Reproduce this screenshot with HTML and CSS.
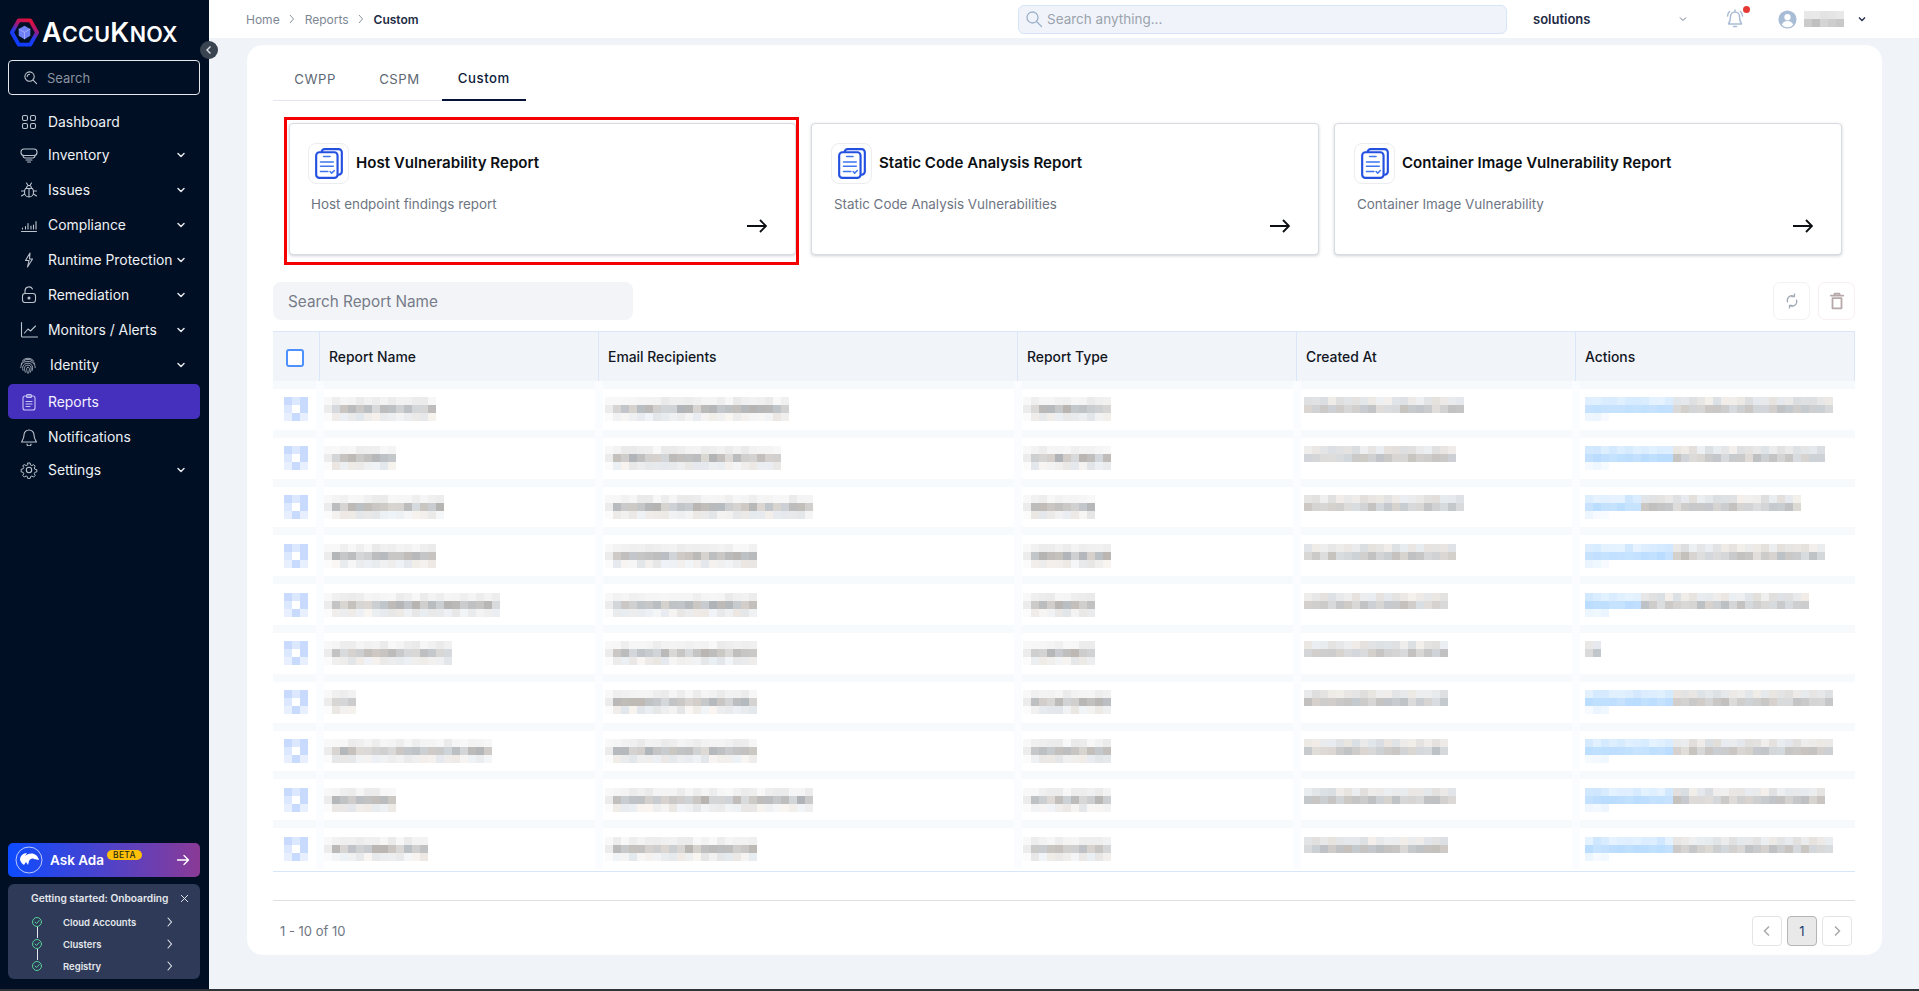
FILE: index.html
```html
<!DOCTYPE html>
<html lang="en">
<head>
<meta charset="utf-8">
<title>AccuKnox Reports</title>
<link rel="stylesheet" href="styles.css">
</head>
<body>
<div class="app">
  <aside class="sidebar">
    <div class="logo">
      <svg class="logo-mark" viewBox="0 0 30 30" width="29" height="29">
        <defs><linearGradient id="hex" x1="0.7" y1="0" x2="0.3" y2="1"><stop offset="0" stop-color="#e0103c"/><stop offset="0.25" stop-color="#b0156e"/><stop offset="0.6" stop-color="#1e3cf0"/><stop offset="1" stop-color="#0f3cff"/></linearGradient></defs>
        <path d="M9 2.500h12L28 15l-7 12.500H9L2 15z" fill="none" stroke="url(#hex)" stroke-width="4" stroke-linejoin="round"/>
        <path d="M15 8l6 3.400v7L15 22l-6-3.600v-7z" fill="#6f80f5"/>
        <path d="M9 11.400l6 3.400 6-3.400M15 14.800V22" fill="none" stroke="#a9b4ff" stroke-width=".8"/>
      </svg>
      <span class="logo-text">A<small>CCU</small>K<small>NOX</small></span>
    </div>
    <label class="side-search">
      <svg viewBox="0 0 16 16" width="15" height="15" class="ic"><circle cx="7" cy="7" r="5"/><path d="M11 11l3.500 3.500M4.500 7A2.500 2.500 0 0 1 7 4.500"/></svg>
      <span>Search</span>
    </label>
    <nav class="nav">
      <a class="nav-item first"><svg viewBox="0 0 18 18" class="ic"><rect x="2.500" y="2.500" width="5" height="5" rx="1.500"/><rect x="10.500" y="2.500" width="5" height="5" rx="1.500"/><rect x="2.500" y="10.500" width="5" height="5" rx="1.500"/><rect x="10.500" y="10.500" width="5" height="5" rx="1.500"/></svg><span>Dashboard</span></a>
      <a class="nav-item tight"><svg viewBox="0 0 18 18" class="ic"><rect x="1" y="3" width="16" height="6.500" rx="3"/><path d="M3 9.500c0 1.500 1 2.500 2.500 2.500h7c1.500 0 2.500-1 2.500-2.500M6 14h6M7.500 16h3"/></svg><span>Inventory</span><svg viewBox="0 0 10 10" class="chev"><path d="M2 3.500L5 6.500 8 3.500"/></svg></a>
      <a class="nav-item"><svg viewBox="0 0 18 18" class="ic"><path d="M5.500 7.500h7c.8 1 1 2.500 1 4 0 2.500-2 4.500-4.500 4.500s-4.500-2-4.500-4.500c0-1.500.2-3 1-4zM6.500 7.500C6.500 5.500 7.500 4.500 9 4.500s2.500 1 2.500 3M6.500 2l1.500 2.500M11.500 2L10 4.500M9 8v8M4.500 10H1.500M13.500 10h3M4.500 13L1.500 15M13.500 13l3 2"/></svg><span>Issues</span><svg viewBox="0 0 10 10" class="chev"><path d="M2 3.500L5 6.500 8 3.500"/></svg></a>
      <a class="nav-item"><svg viewBox="0 0 18 18" class="ic"><path d="M1.500 15.500h15M2.500 13v-1M5.500 13v-2.500M8 13V7.500M11 13v-3M13.500 13V9M16 13V5.500"/></svg><span>Compliance</span><svg viewBox="0 0 10 10" class="chev"><path d="M2 3.500L5 6.500 8 3.500"/></svg></a>
      <a class="nav-item"><svg viewBox="0 0 18 18" class="ic"><path d="M10 2L5.500 9.500H9L7.500 16l5-8H9.500z"/></svg><span>Runtime Protection</span><svg viewBox="0 0 10 10" class="chev"><path d="M2 3.500L5 6.500 8 3.500"/></svg></a>
      <a class="nav-item"><svg viewBox="0 0 18 18" class="ic"><rect x="2.500" y="7.500" width="13" height="9" rx="2.500"/><path d="M5 7.500V5a4 4 0 0 1 7.500-2"/><circle cx="9" cy="12" r="1" class="dot"/></svg><span>Remediation</span><svg viewBox="0 0 10 10" class="chev"><path d="M2 3.500L5 6.500 8 3.500"/></svg></a>
      <a class="nav-item"><svg viewBox="0 0 18 18" class="ic"><path d="M1.500 1.500V15a1 1 0 0 0 1 1h15M4.500 12l3.500-4 2.500 2 5-5"/></svg><span>Monitors / Alerts</span><svg viewBox="0 0 10 10" class="chev"><path d="M2 3.500L5 6.500 8 3.500"/></svg></a>
      <a class="nav-item identity"><svg viewBox="0 0 20 20" class="ic finger"><path d="M4 5a8 8 0 0 1 12 0M2.500 9a8 8 0 0 1 15 0M2 13c0-5 3-7 8-7s8 3 8 7M4.500 16c-.5-1.500-.5-3-.3-4 .6-2.500 2.800-4 5.800-4s5 2 5 5c0 1 0 2-.3 3M7 18c-.8-2-1-4-.8-5.500C6.500 11 8 10.200 10 10.200s3.500 1.300 3.500 3.300c0 1.500-.2 3-.8 4.500M9.500 19c-.8-1.500-1-3.500-1-5 0-1 .5-1.500 1.500-1.500s1.500.7 1.500 1.700c0 1.500-.2 3.200-1 4.800"/></svg><span>Identity</span><svg viewBox="0 0 10 10" class="chev"><path d="M2 3.500L5 6.500 8 3.500"/></svg></a>
      <a class="nav-item active"><svg viewBox="0 0 18 18" class="ic"><rect x="3" y="3" width="12" height="14" rx="2"/><rect x="6.500" y="1.500" width="5" height="3" rx="1"/><path d="M6 8.500h6M6 11h6M6 13.500h4"/></svg><span>Reports</span></a>
      <a class="nav-item"><svg viewBox="0 0 18 18" class="ic"><path d="M9 2a5 5 0 0 0-5 5c0 4-2 6-2.500 7h15c-.5-1-2.500-3-2.500-7a5 5 0 0 0-5-5zM7 16a2 2 0 0 0 4 0"/></svg><span>Notifications</span></a>
      <a class="nav-item tight"><svg viewBox="0 0 18 18" class="ic"><circle cx="9" cy="9" r="2.700"/><path d="M7.800 1.200h2.400l.5 2.200 1.500.7 2-1.100 1.700 1.700-1.100 2 .7 1.500 2.200.5v2.400l-2.200.5-.7 1.500 1.100 2-1.700 1.700-2-1.100-1.500.7-.5 2.200H7.800l-.5-2.200-1.500-.7-2 1.100-1.700-1.700 1.100-2-.7-1.500-2.200-.5V8.200l2.200-.5.7-1.500-1.100-2L3.800 3l2 1.100 1.500-.7z" transform="translate(.9 .9) scale(.9)"/></svg><span>Settings</span><svg viewBox="0 0 10 10" class="chev"><path d="M2 3.500L5 6.500 8 3.500"/></svg></a>
    </nav>
    <div class="side-bottom">
      <div class="ask">
        <svg viewBox="0 0 28 28" width="28" height="28" class="ask-logo"><circle cx="14" cy="14" r="13" fill="none" stroke="#fff" stroke-width=".7"/><path d="M5 14c0-4 3-7 7-7l-2 3c2-2 6-3 9-2 3 1 4 3 5 6l-5-1c-2-1-4 0-5 2l-1 4-2-3-2 3c-2-1-3-3-4-5z" fill="#fff"/></svg>
        <span class="ask-text">Ask Ada</span><span class="beta">BETA</span>
        <svg viewBox="0 0 14 14" width="14" height="14" class="ask-arrow"><path d="M1.500 7h11M8 2.500L12.500 7 8 11.500"/></svg>
      </div>
      <div class="onboard">
        <div class="onboard-head"><span>Getting started: Onboarding</span><svg viewBox="0 0 10 10" width="9" height="9" class="close"><path d="M1.500 1.500l7 7M8.500 1.500l-7 7"/></svg></div>
        <div class="step"><svg viewBox="0 0 12 12" class="check"><circle cx="6" cy="6" r="4.500"/><path d="M4 6l1.500 1.500L8.200 4.500"/></svg><span>Cloud Accounts</span><svg viewBox="0 0 8 10" class="step-chev"><path d="M2 1l3.500 4L2 9"/></svg></div>
        <div class="step linked"><svg viewBox="0 0 12 12" class="check"><circle cx="6" cy="6" r="4.500"/><path d="M4 6l1.500 1.500L8.200 4.500"/></svg><span>Clusters</span><svg viewBox="0 0 8 10" class="step-chev"><path d="M2 1l3.500 4L2 9"/></svg></div>
        <div class="step linked"><svg viewBox="0 0 12 12" class="check"><circle cx="6" cy="6" r="4.500"/><path d="M4 6l1.500 1.500L8.200 4.500"/></svg><span>Registry</span><svg viewBox="0 0 8 10" class="step-chev"><path d="M2 1l3.500 4L2 9"/></svg></div>
      </div>
    </div>
    <button class="collapse" aria-label="Collapse"><svg viewBox="0 0 10 10" width="10" height="10"><path d="M6.500 1.500L3 5l3.500 3.500"/></svg></button>
  </aside>

  <div class="main">
    <header class="topbar">
      <div class="crumbs"><span>Home</span><svg viewBox="0 0 8 10" class="crumb-sep"><path d="M2 1l3.500 4L2 9"/></svg><span>Reports</span><svg viewBox="0 0 8 10" class="crumb-sep"><path d="M2 1l3.500 4L2 9"/></svg><b>Custom</b></div>
      <div class="top-search"><svg viewBox="0 0 18 18" width="18" height="18"><circle cx="7.500" cy="7.500" r="5.500"/><path d="M11.500 11.500l5 5"/></svg><span>Search anything...</span></div>
      <div class="tenant"><span>solutions</span><svg viewBox="0 0 10 10" class="top-chev"><path d="M2 3.500L5 6.500 8 3.500"/></svg></div>
      <div class="bell"><svg viewBox="0 0 20 20" width="20" height="20"><path d="M10 3a4.500 4.500 0 0 0-4.500 4.500c0 4-1 6-2 7.500h13c-1-1.500-2-3.500-2-7.500A4.500 4.500 0 0 0 10 3zM8.500 17.500h3M10 1v2M2.500 7c.2-2 1-3.500 2-4.500M17.500 7c-.2-2-1-3.500-2-4.500"/></svg><i class="bell-dot"></i></div>
      <div class="user">
        <svg viewBox="0 0 20 20" width="19" height="19" class="avatar"><circle cx="10" cy="10" r="9.500" fill="#a9bcd6"/><circle cx="10" cy="7.500" r="3.300" fill="#fff"/><path d="M4 15.500c1-3 3.500-4 6-4s5 1 6 4a8 8 0 0 1-12 0z" fill="#fff"/></svg>
        <span class="mosaic" data-kind="user" data-cells="5"></span>
        <svg viewBox="0 0 10 10" class="top-chev dark"><path d="M2 3.500L5 6.500 8 3.500"/></svg>
      </div>
    </header>

    <main class="content">
      <section class="panel">
        <div class="tabs">
          <a class="tab">CWPP</a><a class="tab">CSPM</a><a class="tab on">Custom</a>
        </div>

        <div class="cards">
          <article class="card">
            <div class="card-head"><span class="doc-box"><svg viewBox="2 1 26 29" width="28" height="31" class="doc"><rect x="8" y="2" width="19" height="24" rx="3"/><rect x="3" y="5" width="20" height="24" rx="3" class="doc-front"/><path d="M10 9h6M7 14h12M7 18h12M7 23h7M16 23l1.500 1.500 2.500-2.500"/></svg></span><h3>Host Vulnerability Report</h3></div>
            <p>Host endpoint findings report</p>
            <svg viewBox="0 0 20 14" width="20" height="14" class="go"><path d="M0 7h19M13 1l6 6-6 6"/></svg>
            <div class="mark"></div>
          </article>
          <article class="card">
            <div class="card-head"><span class="doc-box"><svg viewBox="2 1 26 29" width="28" height="31" class="doc"><rect x="8" y="2" width="19" height="24" rx="3"/><rect x="3" y="5" width="20" height="24" rx="3" class="doc-front"/><path d="M10 9h6M7 14h12M7 18h12M7 23h7M16 23l1.500 1.500 2.500-2.500"/></svg></span><h3>Static Code Analysis Report</h3></div>
            <p>Static Code Analysis Vulnerabilities</p>
            <svg viewBox="0 0 20 14" width="20" height="14" class="go"><path d="M0 7h19M13 1l6 6-6 6"/></svg>
          </article>
          <article class="card">
            <div class="card-head"><span class="doc-box"><svg viewBox="2 1 26 29" width="28" height="31" class="doc"><rect x="8" y="2" width="19" height="24" rx="3"/><rect x="3" y="5" width="20" height="24" rx="3" class="doc-front"/><path d="M10 9h6M7 14h12M7 18h12M7 23h7M16 23l1.500 1.500 2.500-2.500"/></svg></span><h3>Container Image Vulnerability Report</h3></div>
            <p>Container Image Vulnerability</p>
            <svg viewBox="0 0 20 14" width="20" height="14" class="go"><path d="M0 7h19M13 1l6 6-6 6"/></svg>
          </article>
        </div>

        <div class="toolbar">
          <div class="report-search">Search Report Name</div>
          <div class="tools">
            <button class="tool"><svg viewBox="0 0 16 16" width="16" height="16"><path d="M3.500 9A4.700 4.700 0 0 1 10 3.300M12.500 7A4.700 4.700 0 0 1 6 12.700M10.500 1v2.700H8M5.500 15v-2.700H8"/></svg></button>
            <button class="tool del"><svg viewBox="0 0 16 16" width="18" height="18"><path d="M2.500 3.200h11M5.800 3V1.500h4.400V3M4 5.500h8v9H4z"/></svg></button>
          </div>
        </div>

        <div class="table">
          <div class="thead">
            <div class="th"><span class="box"></span></div>
            <div class="th">Report Name</div>
            <div class="th">Email Recipients</div>
            <div class="th">Report Type</div>
            <div class="th">Created At</div>
            <div class="th">Actions</div>
          </div>
          <div class="tr"><div class="td chk"><span class="mosaic" data-kind="check"></span></div><div class="td n"><span class="mosaic" data-cells="14"></span></div><div class="td e"><span class="mosaic" data-cells="23"></span></div><div class="td t"><span class="mosaic" data-cells="11"></span></div><div class="td c"><span class="mosaic" data-kind="two" data-cells="20"></span></div><div class="td a"><span class="mosaic" data-kind="two" data-cells="31" data-blue="11"></span></div></div>
          <div class="tr"><div class="td chk"><span class="mosaic" data-kind="check"></span></div><div class="td n"><span class="mosaic" data-cells="9"></span></div><div class="td e"><span class="mosaic" data-cells="22"></span></div><div class="td t"><span class="mosaic" data-cells="11"></span></div><div class="td c"><span class="mosaic" data-kind="two" data-cells="19"></span></div><div class="td a"><span class="mosaic" data-kind="two" data-cells="30" data-blue="11"></span></div></div>
          <div class="tr"><div class="td chk"><span class="mosaic" data-kind="check"></span></div><div class="td n"><span class="mosaic" data-cells="15"></span></div><div class="td e"><span class="mosaic" data-cells="26"></span></div><div class="td t"><span class="mosaic" data-cells="9"></span></div><div class="td c"><span class="mosaic" data-kind="two" data-cells="20"></span></div><div class="td a"><span class="mosaic" data-kind="two" data-cells="27" data-blue="7"></span></div></div>
          <div class="tr"><div class="td chk"><span class="mosaic" data-kind="check"></span></div><div class="td n"><span class="mosaic" data-cells="14"></span></div><div class="td e"><span class="mosaic" data-cells="19"></span></div><div class="td t"><span class="mosaic" data-cells="11"></span></div><div class="td c"><span class="mosaic" data-kind="two" data-cells="19"></span></div><div class="td a"><span class="mosaic" data-kind="two" data-cells="30" data-blue="11"></span></div></div>
          <div class="tr"><div class="td chk"><span class="mosaic" data-kind="check"></span></div><div class="td n"><span class="mosaic" data-cells="22"></span></div><div class="td e"><span class="mosaic" data-cells="19"></span></div><div class="td t"><span class="mosaic" data-cells="9"></span></div><div class="td c"><span class="mosaic" data-kind="two" data-cells="18"></span></div><div class="td a"><span class="mosaic" data-kind="two" data-cells="28" data-blue="7"></span></div></div>
          <div class="tr"><div class="td chk"><span class="mosaic" data-kind="check"></span></div><div class="td n"><span class="mosaic" data-cells="16"></span></div><div class="td e"><span class="mosaic" data-cells="19"></span></div><div class="td t"><span class="mosaic" data-cells="9"></span></div><div class="td c"><span class="mosaic" data-kind="two" data-cells="18"></span></div><div class="td a"><span class="mosaic" data-kind="two" data-cells="2"></span></div></div>
          <div class="tr"><div class="td chk"><span class="mosaic" data-kind="check"></span></div><div class="td n"><span class="mosaic" data-cells="4"></span></div><div class="td e"><span class="mosaic" data-cells="19"></span></div><div class="td t"><span class="mosaic" data-cells="11"></span></div><div class="td c"><span class="mosaic" data-kind="two" data-cells="18"></span></div><div class="td a"><span class="mosaic" data-kind="two" data-cells="31" data-blue="11"></span></div></div>
          <div class="tr"><div class="td chk"><span class="mosaic" data-kind="check"></span></div><div class="td n"><span class="mosaic" data-cells="21"></span></div><div class="td e"><span class="mosaic" data-cells="19"></span></div><div class="td t"><span class="mosaic" data-cells="11"></span></div><div class="td c"><span class="mosaic" data-kind="two" data-cells="18"></span></div><div class="td a"><span class="mosaic" data-kind="two" data-cells="31" data-blue="11"></span></div></div>
          <div class="tr"><div class="td chk"><span class="mosaic" data-kind="check"></span></div><div class="td n"><span class="mosaic" data-cells="9"></span></div><div class="td e"><span class="mosaic" data-cells="26"></span></div><div class="td t"><span class="mosaic" data-cells="11"></span></div><div class="td c"><span class="mosaic" data-kind="two" data-cells="19"></span></div><div class="td a"><span class="mosaic" data-kind="two" data-cells="30" data-blue="11"></span></div></div>
          <div class="tr"><div class="td chk"><span class="mosaic" data-kind="check"></span></div><div class="td n"><span class="mosaic" data-cells="13"></span></div><div class="td e"><span class="mosaic" data-cells="19"></span></div><div class="td t"><span class="mosaic" data-cells="11"></span></div><div class="td c"><span class="mosaic" data-kind="two" data-cells="18"></span></div><div class="td a"><span class="mosaic" data-kind="two" data-cells="31" data-blue="11"></span></div></div>
        </div>

        <footer class="foot">
          <span class="count">1 - 10 of 10</span>
          <div class="pager">
            <button class="pg"><svg viewBox="0 0 10 12" width="10" height="12"><path d="M7 1.500L2.500 6 7 10.500"/></svg></button>
            <button class="pg cur">1</button>
            <button class="pg"><svg viewBox="0 0 10 12" width="10" height="12"><path d="M3 1.500L7.500 6 3 10.500"/></svg></button>
          </div>
        </footer>
      </section>
    </main>
  </div>
</div>
<div class="strip"></div>
<script src="app.js"></script>
</body>
</html>
```
FILE: styles.css
```css
* { box-sizing: border-box; }
html, body { margin: 0; height: 100%; overflow: hidden; }
body { font-family: Inter, "Noto Sans", "Liberation Sans", sans-serif; background: #f0f3f8; color: #111827; }
button { font: inherit; padding: 0; background: none; cursor: pointer; }
h3, p { margin: 0; }

.app { display: flex; height: 989px; }
.strip { height: 2px; background: #2e3338; }

/* sidebar */
.sidebar { position: relative; flex: 0 0 209px; min-width: 0; background: #000f24; color: #eef1f5; display: flex; flex-direction: column; padding: 0 9px 10px 8px; }
.logo { display: flex; align-items: center; gap: 3px; height: 60px; padding: 4px 0 0 2px; }
.logo-text { font-size: 27px; font-weight: 600; color: #fff; line-height: 1; letter-spacing: .3px; }
.logo-text small { font-size: 21.500px; }
.side-search { display: flex; align-items: center; gap: 9px; height: 35px; padding-left: 14px; border: 1px solid #e6e8ec; border-radius: 4px; font-size: 13px; color: #8b93a0; }
.ic { width: 18px; height: 18px; flex: none; fill: none; stroke: #bcc3cd; stroke-width: 1.100; stroke-linecap: round; stroke-linejoin: round; }
.ic .dot { fill: #d5dae1; }
.side-search .ic { width: 15px; height: 15px; stroke: #c9ced6; }
.nav { display: flex; flex-direction: column; margin-top: 9px; }
.nav-item { display: flex; align-items: center; height: 35px; padding-left: 12px; gap: 10px; border-radius: 5px; font-size: 13.900px; color: #eef1f5; }
.nav-item.tight { margin-top: -2px; }
.nav-item span { flex: 1; min-width: 0; white-space: nowrap; }
.nav-item.identity { margin-bottom: 2px; gap: 13px; padding-left: 11px; }
.ic.finger { width: 18px; stroke-width: .9; }
.nav-item.active { background: #4530bd; color: #f3f1ff; }
.nav-item.active .ic { stroke: #c7c6f3; }
.chev { width: 10px; height: 10px; margin-right: 14px; flex: none; fill: none; stroke: #e5e8ec; stroke-width: 1.500; stroke-linecap: round; stroke-linejoin: round; }
.side-bottom { margin-top: auto; display: flex; flex-direction: column; gap: 7px; }
.ask { display: flex; align-items: center; height: 34px; border-radius: 5px; padding: 0 10px 0 7px; background: linear-gradient(90deg, #0d4bff, #8b3a96); color: #fff; }
.ask-logo { flex: none; }
.ask-text { margin-left: 7px; font-size: 13.500px; font-weight: 600; }
.beta { align-self: flex-start; margin: 7px 0 0 3px; background: #ffc107; color: #2a2a1a; font-size: 8.500px; line-height: 10px; font-weight: 500; padding: 0 6px; border-radius: 5px; letter-spacing: .3px; }
.ask-arrow { margin-left: auto; fill: none; stroke: #fff; stroke-width: 1.300; stroke-linecap: round; stroke-linejoin: round; }
.onboard { height: 95px; background: #2e3a57; border-radius: 6px; padding: 8px 0 0; color: #e4e7ec; font-size: 9.500px; font-weight: 600; }
.onboard-head { display: flex; align-items: center; justify-content: space-between; padding: 0 11px 0 23px; height: 12px; font-size: 10.200px; margin-bottom: 7px; }
.close { fill: none; stroke: #e4e7ec; stroke-width: 1.100; stroke-linecap: round; }
.step { position: relative; display: flex; align-items: center; height: 22px; padding-left: 23px; }
.step span { margin-left: 20px; flex: 1; }
.check { width: 12px; height: 12px; fill: none; stroke: #58cf9a; stroke-width: 1; stroke-linecap: round; stroke-linejoin: round; flex: none; }
.step-chev { width: 8px; height: 10px; margin-right: 26px; fill: none; stroke: #e4e7ec; stroke-width: 1.100; stroke-linecap: round; }
.step.linked::before { content: ""; position: absolute; left: 29px; top: -6px; height: 11px; width: 1px; background: #e4e7ec; }
.collapse { position: absolute; top: 41px; right: -9px; width: 18px; height: 18px; border: 0; border-radius: 50%; background: #3a4350; display: flex; align-items: center; justify-content: center; z-index: 2; }
.collapse svg { fill: none; stroke: #dfe3e8; stroke-width: 1.400; }

/* top bar */
.main { flex: 1; display: flex; flex-direction: column; min-width: 0; }
.topbar { height: 38px; background: #fff; display: flex; align-items: center; padding-left: 37px; font-size: 12px; }
.crumbs { display: flex; align-items: center; gap: 8.500px; width: 772px; color: #7d8794; }
.crumbs b { color: #1d2b44; font-weight: 600; }
.crumb-sep { width: 8px; height: 10px; fill: none; stroke: #8a93a0; stroke-width: 1; }
.top-search { display: flex; align-items: center; gap: 4px; width: 489px; height: 29px; padding-left: 6px; background: #f0f4fa; border: 1px solid #d5e4f8; border-radius: 6px; font-size: 13.500px; color: #9aa2ad; }
.top-search svg { fill: none; stroke: #9cb0c9; stroke-width: 1.300; stroke-linecap: round; }
.tenant { display: flex; align-items: center; margin-left: 26px; width: 155px; font-size: 13px; font-weight: 600; color: #1e2a44; }
.tenant span { flex: 1; }
.top-chev { width: 10px; height: 10px; fill: none; stroke: #6d7a8e; stroke-width: 1; }
.top-chev.dark { stroke: #1e2a44; stroke-width: 1.300; }
.bell { position: relative; margin-left: 37px; height: 20px; }
.bell svg { fill: none; stroke: #a9bcd6; stroke-width: 1.500; stroke-linecap: round; stroke-linejoin: round; }
.bell-dot { position: absolute; top: -3px; right: -5px; width: 7px; height: 7px; border-radius: 50%; background: #e53935; }
.user { display: flex; align-items: center; margin-left: 33px; }
.avatar { flex: none; }
.user .mosaic { margin-left: 7px; }
.user .top-chev { margin-left: 13px; }

/* content */
.content { flex: 1; padding: 7px 37px 34px 38px; min-height: 0; }
.panel { height: 910px; background: #fff; border-radius: 16px; padding: 0 27px 0 26px; display: flex; flex-direction: column; }
.tabs { display: flex; width: 253px; height: 56px; flex: none; border-bottom: 1px solid #e3e6ec; }
.tab { display: flex; align-items: center; justify-content: center; flex: 1; height: 56px; padding-top: 11px; font-size: 13.200px; letter-spacing: .55px; color: #606873; }
.tab.on { color: #0c1a3a; font-weight: 500; border-bottom: 2px solid #051338; }

.cards { display: flex; gap: 15px; margin: 22px 13px 0 16px; }
.card { position: relative; flex: 1; height: 132px; background: #fff; border: 1px solid #d8dbe0; border-radius: 4px; box-shadow: 0 1px 3px rgba(60, 70, 90, .25); padding: 19px 0 0 18px; }
.card + .card { padding-left: 19px; }
.card:first-child { flex: 0 0 507px; }
.card-head { display: flex; align-items: center; gap: 7px; }
.doc-box { width: 41px; height: 41px; display: flex; align-items: center; justify-content: center; border: 1px solid #ebedf0; border-radius: 8px; flex: none; }
.doc { fill: #fff; stroke: #2450e0; stroke-width: 2; stroke-linecap: round; stroke-linejoin: round; }
.doc path { stroke: #3f76ee; stroke-width: 1.400; }
.card h3 { font-size: 15.100px; font-weight: 600; color: #0c0f14; padding-bottom: 2px; }
.card p { margin: 12px 0 0 3px; font-size: 13.400px; color: #6e7582; }
.go { position: absolute; right: 28px; top: 95px; fill: none; stroke: #0c0f14; stroke-width: 1.900; }
.mark { position: absolute; top: -7px; left: -6px; right: -4px; bottom: -11px; border: 3px solid #f40000; pointer-events: none; }

.toolbar { display: flex; justify-content: space-between; margin-top: 27px; height: 38px; flex: none; }
.report-search { width: 360px; background: #f3f4f8; border-radius: 8px; padding-left: 15px; display: flex; align-items: center; font-size: 15.300px; color: #767c88; }
.tools { display: flex; gap: 8px; }
.tool { width: 37px; height: 38px; border: 1px solid #f0f2f6; border-radius: 7px; display: flex; align-items: center; justify-content: center; }
.tool svg { fill: none; stroke: #a4acb8; stroke-width: 1.300; stroke-linecap: round; stroke-linejoin: round; }
.tool.del { border-color: #f9eef0; }
.tool.del svg { stroke: #b7a9ab; stroke-width: 1.600; }

.table { margin-top: 11px; padding-bottom: 2px; border-bottom: 1px solid #d8e6fb; }
.thead, .tr { display: grid; grid-template-columns: 46px 279px 419px 279px 279px 280px; }
.thead { height: 50px; background: #f1f4f9; border-top: 1px solid #dbe7f8; border-right: 1px solid #dbe7f8; }
.th { display: flex; align-items: center; padding: 0 0 0 9px; border-left: 1px solid #dbe7f8; font-size: 13.900px; font-weight: 500; color: #12161f; }
.th:first-child { border-left: 0; padding: 3px 0 0 13px; }
.box { width: 18px; height: 18px; border: 2px solid #4d90fe; border-radius: 3px; background: #fff; }
.tr { height: 48.800px; background: linear-gradient(#f7fafd, #f7fafd) top / 100% 8px no-repeat #fff; }
.td { display: flex; align-items: center; padding-top: 8px; box-shadow: inset 5px 0 #fbfcff, -3px 0 #fbfcff; }
.td.chk { padding-left: 11px; box-shadow: none; }
.td.n { padding-left: 5px; }
.td.e { padding-left: 7px; }
.td.t { padding-left: 6px; }
.td.c { padding-left: 8px; }
.td.a { padding-left: 10px; }
.mosaic { display: block; height: 24px; background-repeat: no-repeat; flex: none; }

.foot { margin-top: 28px; border-top: 1px solid #e0e0e0; padding: 15px 3px 0 7px; height: 46px; flex: none; display: flex; align-items: center; justify-content: space-between; }
.count { font-size: 13px; color: #6f7682; }
.pager { display: flex; gap: 5px; }
.pg { width: 30px; height: 30px; border: 1px solid #e4e4e4; border-radius: 4px; display: flex; align-items: center; justify-content: center; font-size: 13px; color: #1f3a6e; }
.pg svg { fill: none; stroke: #a9a9a9; stroke-width: 1.500; }
.pg.cur { background: #e9e9e9; border-color: #b5b5b5; }
```
FILE: app.js
```js
// Renders the redacted (pixelated) table values as 8px colour blocks.
(function () {
  var seed = 7;
  function rnd() { seed = (seed * 9301 + 49297) % 233280; return seed / 233280; }
  function grey(lo, hi, tint) {
    var v = Math.round(lo + rnd() * (hi - lo));
    var t = tint ? Math.round((rnd() - 0.5) * 10) : 0;
    return 'rgb(' + (v + t) + ',' + v + ',' + (v - t) + ')';
  }
  function blue(lo, hi) {
    var k = lo + rnd() * (hi - lo);
    return 'rgb(' + Math.round(255 - 70 * k) + ',' + Math.round(255 - 35 * k) + ',255)';
  }
  function rowImage(colors, y) {
    var stops = colors.map(function (c, i) {
      return c + ' ' + (i * 8) + 'px ' + ((i + 1) * 8) + 'px';
    }).join(',');
    return 'linear-gradient(90deg,' + stops + ') 0 ' + y + 'px/' + (colors.length * 8) + 'px 8px no-repeat';
  }
  function paint(el, rows) {
    el.style.width = rows[0].length * 8 + 'px';
    el.style.height = rows.length * 8 + 'px';
    el.style.background = rows.map(function (r, i) { return rowImage(r, i * 8); }).join(',');
  }
  function line(n, fn) {
    var out = [];
    for (var i = 0; i < n; i++) out.push(fn(i));
    return out;
  }
  document.querySelectorAll('.mosaic').forEach(function (el) {
    var kind = el.dataset.kind;
    var n = +el.dataset.cells || 3;
    var nb = +el.dataset.blue || 0;
    if (kind === 'check') {
      var a = '#c8dbff', b = '#dbe8ff', c = '#e8f0ff';
      paint(el, [[a, b, a], [b, '#ffffff', a], [c, a, c]]);
    } else if (kind === 'user') {
      paint(el, [line(n, function () { return grey(225, 240); }), line(n, function () { return grey(190, 215); })]);
    } else if (kind === 'two') {
      paint(el, [
        line(n, function (i) { return i < nb ? blue(.35, .7) : grey(222, 240, true); }),
        line(n, function (i) { return i < nb ? blue(.8, 1) : grey(192, 222, true); }),
        line(n, function (i) { return i < nb && i < 3 ? blue(.1, .3) : '#ffffff'; })
      ]);
    } else {
      paint(el, [
        line(n, function (i) { return i === 0 ? '#f8f8f8' : grey(234, 248); }),
        line(n, function (i) { return i === 0 ? '#ececec' : grey(180, 218, true); }),
        line(n, function (i) { return i === 0 ? '#fbfbfb' : grey(230, 246, true); })
      ]);
    }
  });
})();
```
